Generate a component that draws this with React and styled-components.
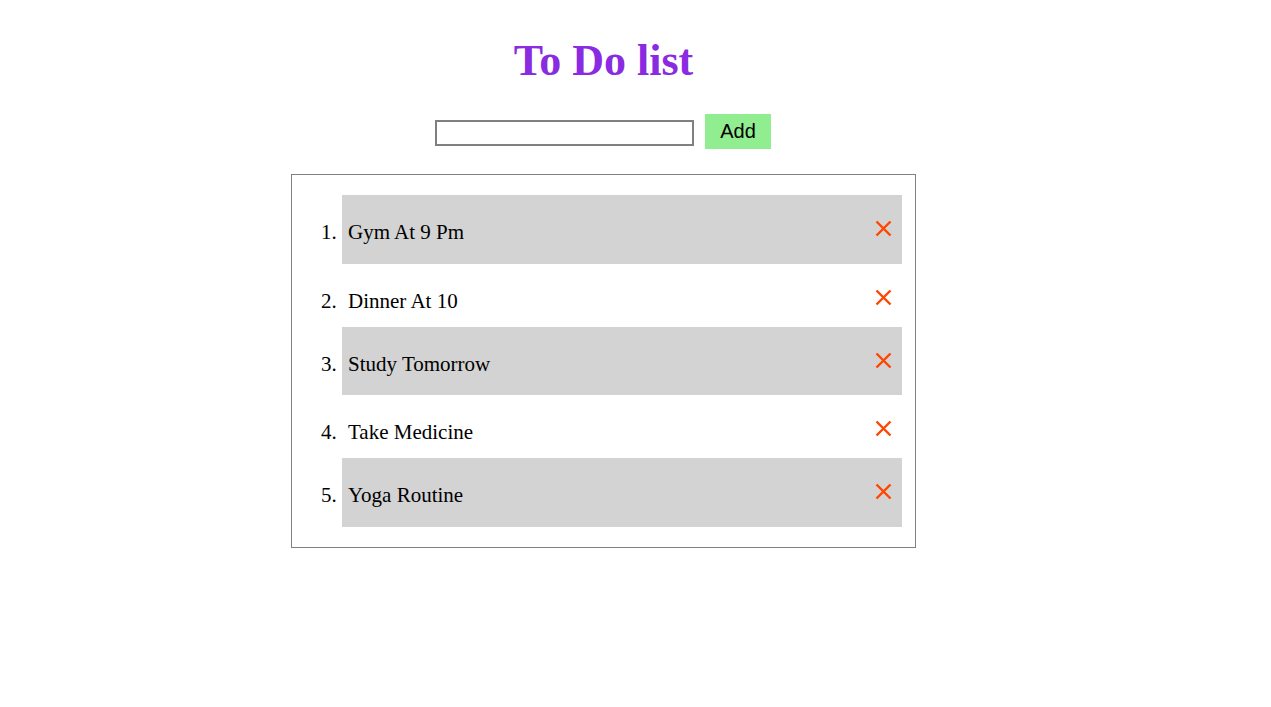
import React, { useState } from "react";
import styled, { createGlobalStyle } from "styled-components";

const GlobalStyle = createGlobalStyle`
  body {
    margin: 8px;
    background: #fff;
    font-family: "Liberation Serif", "Times New Roman", serif;
  }
`;

const Page = styled.div`
  width: 1191px;
  display: flex;
  flex-direction: column;
  align-items: center;
`;

const Title = styled.h1`
  margin: 27px 0 27px;
  font-size: 44px;
  line-height: 52px;
  font-weight: bold;
  color: #8a2be2;
`;

const Form = styled.form`
  display: flex;
  align-items: center;
  gap: 11px;
  margin-bottom: 25px;
  margin-right: 1px;
`;

const TextInput = styled.input`
  box-sizing: border-box;
  width: 259px;
  height: 26px;
  margin-top: 3px;
  border: 2px solid #808080;
  padding: 0 4px;
  font-size: 16px;
  outline: none;
`;

const AddButton = styled.button`
  height: 35px;
  padding: 0 15px;
  border: none;
  background: #90ee90;
  color: #000;
  font-family: "Liberation Sans", Arial, sans-serif;
  font-size: 20px;
  cursor: pointer;
`;

const Box = styled.div`
  box-sizing: border-box;
  width: 625px;
  border: 1px solid #808080;
  padding: 20px 13px 20px 10px;
`;

const List = styled.ol`
  margin: 0;
  padding-left: 40px;
  font-size: 21px;
  line-height: 24px;
`;

const Item = styled.li`
  padding: 25px 10px ${(p) => (p.$shaded ? "19.7px" : "14px")} 6px;
  background: ${(p) => (p.$shaded ? "#d3d3d3" : "transparent")};
`;

const Row = styled.div`
  display: flex;
  justify-content: space-between;
  align-items: flex-start;
`;

const RemoveButton = styled.button`
  width: 17px;
  height: 17px;
  padding: 0;
  border: none;
  background: none;
  cursor: pointer;
  display: flex;
  svg {
    display: block;
  }
`;

const CrossIcon = () => (
  <svg width="17" height="17" viewBox="0 0 17 17">
    <path
      d="M1.5 1.5 L15.5 15.5 M15.5 1.5 L1.5 15.5"
      stroke="#ff4500"
      strokeWidth="2.4"
      fill="none"
    />
  </svg>
);

export default function App() {
  const [text, setText] = useState("");
  const [items, setItems] = useState([
    "Gym At 9 Pm",
    "Dinner At 10",
    "Study Tomorrow",
    "Take Medicine",
    "Yoga Routine",
  ]);

  const onSubmit = (e) => {
    e.preventDefault();
    if (!text.trim()) return;
    setItems([...items, text]);
    setText("");
  };

  return (
    <>
      <GlobalStyle />
      <Page>
        <Title>To Do list</Title>
        <Form onSubmit={onSubmit}>
          <TextInput value={text} onChange={(e) => setText(e.target.value)} />
          <AddButton type="submit">Add</AddButton>
        </Form>
        <Box>
          <List>
            {items.map((item, i) => (
              <Item key={i} $shaded={i % 2 === 0}>
                <Row>
                  <span>{item}</span>
                  <RemoveButton
                    onClick={() => setItems(items.filter((_, j) => j !== i))}
                  >
                    <CrossIcon />
                  </RemoveButton>
                </Row>
              </Item>
            ))}
          </List>
        </Box>
      </Page>
    </>
  );
}
